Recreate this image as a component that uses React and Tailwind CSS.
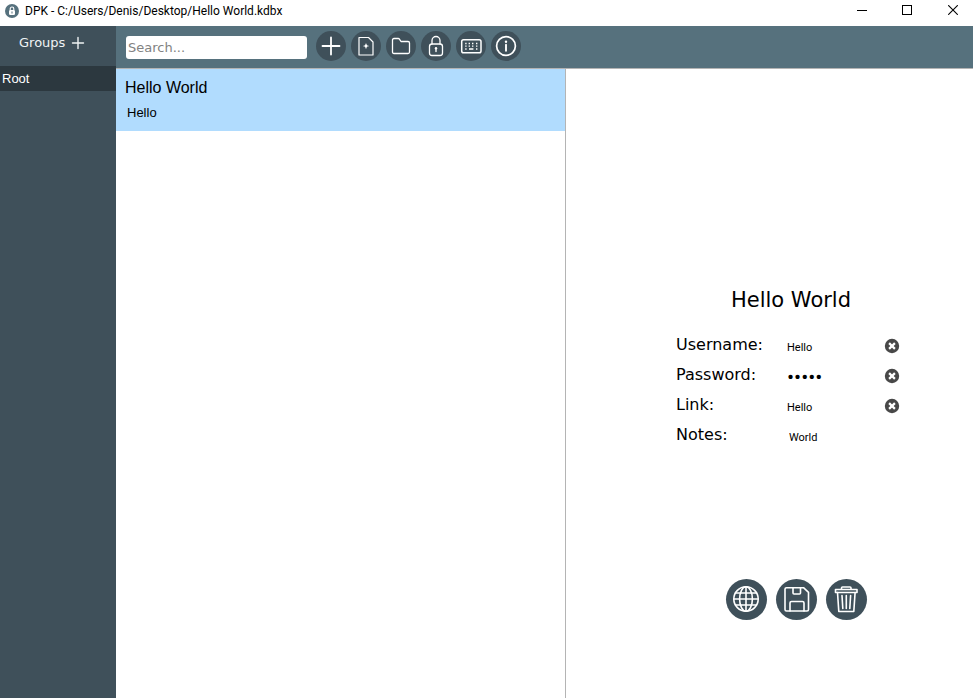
import React from "react";

const verdana = "font-['DejaVu_Sans',Verdana,sans-serif]";
const arial = "font-['Liberation_Sans',Arial,sans-serif]";

function Stroke({ className, children, width = 1.5, box = 24 }) {
  return (
    <svg
      className={className}
      viewBox={`0 0 ${box} ${box}`}
      fill="none"
      stroke="currentColor"
      strokeWidth={width}
      strokeLinejoin="round"
      strokeLinecap="round"
      aria-hidden="true"
    >
      {children}
    </svg>
  );
}

const tools = [
  {
    label: "Add entry",
    icon: <path d="M15 6.500v17M6.500 15h17" strokeWidth="1.8" />,
  },
  {
    label: "New database",
    icon: (
      <>
        <path d="M8 6.5h9.5L22 11v13H8z" strokeWidth="1.2" />
        <path d="M15 13v4M13 15h4" strokeWidth="1.2" />
        <circle cx="15" cy="15" r="1.200" fill="currentColor" stroke="none" />
      </>
    ),
  },
  {
    label: "Open database",
    icon: (
      <path
        d="M6.5 9q0-1.5 1.5-1.5h4.2q.8 0 1.2.6l1.6 2.4h7q1.5 0 1.5 1.5v9q0 1.5-1.5 1.5H8q-1.5 0-1.5-1.5z"
        strokeWidth="1.3"
      />
    ),
  },
  {
    label: "Lock",
    icon: (
      <>
        <rect x="8.5" y="13" width="13" height="11.5" rx="2.5" strokeWidth="1.3" />
        <path d="M11 13V9.5a4 4 0 0 1 8 0V13" strokeWidth="1.3" />
        <circle cx="15" cy="17.3" r="1.2" fill="currentColor" stroke="none" />
        <path d="M15 17.5v3" strokeWidth="1.4" />
      </>
    ),
  },
  {
    label: "Generate password",
    icon: (
      <>
        <rect x="5.7" y="8.7" width="19.3" height="13" rx="1.8" strokeWidth="1.5" />
        <path
          d="M9.2 12.5h1.4M12.6 12.5H14M16 12.5h1.4M20 12.5h1.4M9.2 15.2h1.4M12.6 15.2H14M16 15.2h1.4M20 15.2h1.4M9.2 18h1.4M13 18h4.4M20 18h1.4"
          strokeWidth="1.3"
          strokeLinecap="butt"
        />
      </>
    ),
  },
  {
    label: "About",
    icon: (
      <>
        <circle cx="15" cy="15" r="9.4" strokeWidth="1.7" />
        <circle cx="15" cy="10.7" r="1.2" fill="currentColor" stroke="none" />
        <path d="M15 13.8v6" strokeWidth="1.9" />
      </>
    ),
  },
];

const actions = [
  {
    label: "Open link",
    icon: (
      <>
        <circle cx="20" cy="20" r="12.2" />
        <ellipse cx="20" cy="20" rx="6.4" ry="12.2" />
        <path d="M20 8v24M8 20h24M9.500 14h21M9.500 26h21" />
      </>
    ),
  },
  {
    label: "Save",
    icon: (
      <>
        <path d="M10.5 8.7h17l5 4.6v17.2q0 1.5-1.5 1.5H10.5q-1.5 0-1.5-1.5V10.2q0-1.5 1.5-1.5z" />
        <path d="M17 8.7V14q0 1 1 1h5.500q1 0 1-1V8.700" />
        <path d="M14 32v-8q0-1.500 1.500-1.500h11q1.500 0 1.500 1.500v8" />
      </>
    ),
  },
  {
    label: "Delete",
    icon: (
      <>
        <path d="M9.500 10.500h21.500v3H9.500zM15.500 10.500V9q0-1 1-1h7.500q1 0 1 1v1.500" />
        <path d="M11.500 13.500l1.300 19h15l1.300-19" />
        <path d="M16 16.500l.8 13M20.300 16.500v13M24.600 16.500l-.8 13" />
      </>
    ),
  },
];

const fields = [
  { id: "username", label: "Username:", type: "text", value: "Hello", clear: true },
  { id: "password", label: "Password:", type: "password", value: "Hello", clear: true },
  { id: "link", label: "Link:", type: "text", value: "Hello", clear: true },
  { id: "notes", label: "Notes:", type: "text", value: "World", clear: false },
];

const fieldText = {
  username: "text-[11px]",
  password: "text-[21px]",
  link: "text-[11px]",
  notes: "pl-[2px] text-[11px]",
};

function TitleBar() {
  return (
    <header className="flex h-[26px] shrink-0 items-start justify-between bg-white">
      <div className="flex h-[21px] items-center gap-[6px] pl-[5px]">
        <svg className="size-[14px]" viewBox="0 0 14 14" aria-hidden="true">
          <circle cx="7" cy="7" r="7" fill="#56717d" />
          <rect x="4" y="6" width="6" height="5" rx="1.2" fill="#fff" />
          <path d="M5.200 6V4.800a1.800 1.800 0 0 1 3.600 0V6" fill="none" stroke="#fff" strokeWidth="1.100" />
          <rect x="6.500" y="7.500" width="1" height="2" fill="#56717d" />
        </svg>
        <h1 className="font-[Roboto,'Open_Sans',sans-serif] text-[12px] leading-4 whitespace-nowrap text-black">
          DPK - C:/Users/Denis/Desktop/Hello World.kdbx
        </h1>
      </div>
      <div className="flex h-5">
        <button type="button" aria-label="Minimize" className="flex w-[38px] items-center justify-center">
          <svg className="size-[10px]" viewBox="0 0 10 10" shapeRendering="crispEdges" aria-hidden="true">
            <path d="M0 5.500h10" stroke="#000" />
          </svg>
        </button>
        <button type="button" aria-label="Maximize" className="flex w-[52px] items-center justify-center">
          <svg className="size-[10px]" viewBox="0 0 10 10" shapeRendering="crispEdges" aria-hidden="true">
            <rect x=".5" y=".5" width="9" height="9" fill="none" stroke="#000" />
          </svg>
        </button>
        <button type="button" aria-label="Close" className="flex w-10 items-center justify-center">
          <svg className="size-[10px]" viewBox="0 0 10 10" aria-hidden="true">
            <path d="M.2.2l9.600 9.600M9.800.2L.2 9.800" stroke="#000" strokeWidth="1.100" />
          </svg>
        </button>
      </div>
    </header>
  );
}

function Sidebar() {
  return (
    <aside className="w-[116px] shrink-0 bg-[#3f505a]">
      <div className="flex h-10 items-center gap-[6px] pb-[7px] pl-[19px] text-[#f0f3f4]">
        <h2 className={`${verdana} text-[13px] leading-4`}>Groups</h2>
        <button type="button" aria-label="Add group">
          <Stroke className="size-[14px]" box={14} width={1.4}>
            <path d="M7 1.500v11M1.500 7h11" />
          </Stroke>
        </button>
      </div>
      <button
        type="button"
        className={`${arial} block h-[25px] w-full bg-[#2c383f] pl-[2px] text-left text-[13px] leading-4 text-white`}
      >
        Root
      </button>
    </aside>
  );
}

function Toolbar() {
  return (
    <div className="flex h-[43px] shrink-0 items-center border-b border-[#b4b4b4] bg-[#56717d] pb-[2px] pl-[10px]">
      <input
        type="search"
        aria-label="Search"
        placeholder="Search..."
        className={`${verdana} mt-[2px] h-[23px] w-[181px] rounded-[3px] bg-white px-[2px] text-[13px] text-black placeholder:text-[#828282] focus:outline-none`}
      />
      <div className="ml-[9px] flex gap-[5px]">
        {tools.map((t) => (
          <button
            key={t.label}
            type="button"
            aria-label={t.label}
            className="size-[30px] rounded-full bg-[#3f505a] text-white"
          >
            <Stroke className="size-[30px]" box={30}>
              {t.icon}
            </Stroke>
          </button>
        ))}
      </div>
    </div>
  );
}

function EntryList() {
  return (
    <section className="flex-[449_1_0%] border-r border-[#b4b4b4] bg-white">
      <button
        type="button"
        className={`${arial} block h-[62px] w-full bg-[#b1dcfe] pt-[2px] pl-[9px] text-left text-black`}
      >
        <span className="block text-[16px] leading-6">Hello World</span>
        <span className="block pl-[2px] text-[13px] leading-[26px]">Hello</span>
      </button>
    </section>
  );
}

function Details() {
  return (
    <section className="flex flex-[407_1_0%] flex-col items-center bg-white pt-[217px]">
      <h2 className={`${verdana} pl-[43px] text-[21px] leading-7 text-black`}>Hello World</h2>
      <form className="mt-[15px] ml-[37px] w-56" onSubmit={(e) => e.preventDefault()}>
        {fields.map((f) => (
          <div key={f.id} className="flex h-[30px] items-center">
            <label
              htmlFor={f.id}
              className={`${verdana} w-[111px] shrink-0 pt-[2px] text-[16px] leading-6 text-black`}
            >
              {f.label}
            </label>
            <input
              id={f.id}
              type={f.type}
              defaultValue={f.value}
              className={`mt-[7px] h-5 w-[90px] min-w-0 bg-transparent font-[Roboto,'Open_Sans',sans-serif] text-black focus:outline-none ${fieldText[f.id]}`}
            />
            {f.clear && (
              <button type="button" aria-label={`Clear ${f.id}`} className="mt-[3px] ml-auto">
                <svg className="size-4" viewBox="0 0 16 16" aria-hidden="true">
                  <circle cx="8" cy="8" r="7.200" fill="#484848" />
                  <path d="M5.100 5.100l5.800 5.800M10.900 5.100l-5.800 5.800" stroke="#fff" strokeWidth="2.200" />
                </svg>
              </button>
            )}
          </div>
        ))}
      </form>
      <div className="mt-[130px] flex gap-[9px] pl-[54px]">
        {actions.map((a) => (
          <button
            key={a.label}
            type="button"
            aria-label={a.label}
            className="size-[41px] rounded-full bg-[#3f505a] text-white"
          >
            <Stroke className="size-[41px]" box={41} width={1.6}>
              {a.icon}
            </Stroke>
          </button>
        ))}
      </div>
    </section>
  );
}

export default function App() {
  return (
    <div className="flex min-h-screen flex-col bg-white">
      <TitleBar />
      <div className="flex flex-1">
        <Sidebar />
        <main className="flex min-w-0 flex-1 flex-col">
          <Toolbar />
          <div className="flex flex-1">
            <EntryList />
            <Details />
          </div>
        </main>
      </div>
    </div>
  );
}
